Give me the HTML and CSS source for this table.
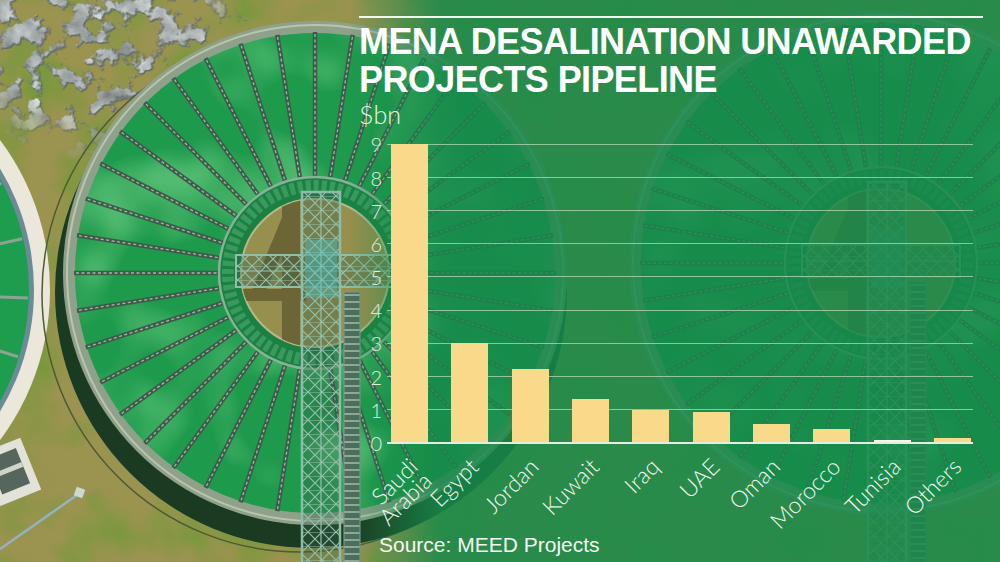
FILE: index.html
```html
<!DOCTYPE html>
<html lang="en">
<head>
<meta charset="utf-8">
<title>MENA desalination unawarded projects pipeline</title>
<link rel="stylesheet" href="styles.css">
</head>
<body>
<div class="canvas">
  <svg class="photo" width="1000" height="562" viewBox="0 0 1000 562" aria-hidden="true">
    <defs>
      <filter id="patchf" x="0" y="0" width="1" height="1" color-interpolation-filters="sRGB">
        <feTurbulence type="fractalNoise" baseFrequency="0.018" numOctaves="3" seed="3"/>
        <feColorMatrix type="matrix" values="0 0 0 0 0.45  0 0 0 0 0.6  0 0 0 0 0.22  2.2 0 0 0 -0.95"/>
      </filter>
      <filter id="rockf" x="0" y="0" width="1" height="1" color-interpolation-filters="sRGB">
        <feTurbulence type="fractalNoise" baseFrequency="0.045" numOctaves="4" seed="11" result="n"/>
        <feColorMatrix in="n" type="matrix" values="0 0 0 0 0.40  0 0 0 0 0.43  0 0 0 0 0.42  13 0 0 0 -6.5" result="dark"/>
        <feColorMatrix in="n" type="matrix" values="0 0.55 0 0 0.4  0 0.55 0 0 0.42  0 0.55 0 0 0.42  13 0 0 0 -7.0" result="light"/>
        <feOffset in="light" dx="-1" dy="-1" result="lo"/>
        <feMerge><feMergeNode in="dark"/><feMergeNode in="lo"/></feMerge>
      </filter>
      <filter id="cloudf" x="0" y="0" width="1" height="1" color-interpolation-filters="sRGB">
        <feTurbulence type="fractalNoise" baseFrequency="0.013" numOctaves="2" seed="5"/>
        <feColorMatrix type="matrix" values="0 0 0 0 0.33  0 0 0 0 0.74  0 0 0 0 0.45  2.8 0 0 0 -1.25"/>
      </filter>
      <radialGradient id="rockfade" cx="0.45" cy="0.4" r="0.6">
        <stop offset="0" stop-color="#fff"/>
        <stop offset="0.6" stop-color="#fff"/>
        <stop offset="1" stop-color="#000"/>
      </radialGradient>
      <mask id="rockmask">
        <ellipse cx="112" cy="62" rx="150" ry="100" fill="url(#rockfade)"/>
      </mask>
      <pattern id="xt" width="14" height="14" patternUnits="userSpaceOnUse">
        <rect width="14" height="14" fill="#35624d" fill-opacity="0.35"/>
        <path d="M0 0L14 14M14 0L0 14" stroke="#93bfa9" stroke-width="1.2"/>
        <path d="M0 0H14" stroke="#93bfa9" stroke-width="1"/>
      </pattern>
      <pattern id="lad" width="17" height="7" patternUnits="userSpaceOnUse">
        <rect width="17" height="7" fill="#4f6d5c"/>
        <rect width="17" height="2" fill="#93aa9b"/>
      </pattern>
      <clipPath id="waterclip"><circle cx="315" cy="273" r="240"/></clipPath>
      <clipPath id="tanclip"><circle cx="315" cy="273" r="74"/></clipPath>
      <g id="sp">
        <line x1="408" y1="273" x2="556" y2="273" stroke="#3e5b4a" stroke-width="4.5"/>
        <line x1="408" y1="273" x2="556" y2="273" stroke="#a2b7a5" stroke-width="1.3" stroke-dasharray="3 2.5"/>
      </g>
      <g id="spokes">
        <use href="#sp"/>
        <use href="#sp" transform="rotate(9 315 273)"/>
        <use href="#sp" transform="rotate(18 315 273)"/>
        <use href="#sp" transform="rotate(27 315 273)"/>
        <use href="#sp" transform="rotate(36 315 273)"/>
        <use href="#sp" transform="rotate(45 315 273)"/>
        <use href="#sp" transform="rotate(54 315 273)"/>
        <use href="#sp" transform="rotate(63 315 273)"/>
        <use href="#sp" transform="rotate(72 315 273)"/>
        <use href="#sp" transform="rotate(81 315 273)"/>
        <use href="#sp" transform="rotate(99 315 273)"/>
        <use href="#sp" transform="rotate(108 315 273)"/>
        <use href="#sp" transform="rotate(117 315 273)"/>
        <use href="#sp" transform="rotate(126 315 273)"/>
        <use href="#sp" transform="rotate(135 315 273)"/>
        <use href="#sp" transform="rotate(144 315 273)"/>
        <use href="#sp" transform="rotate(153 315 273)"/>
        <use href="#sp" transform="rotate(162 315 273)"/>
        <use href="#sp" transform="rotate(171 315 273)"/>
        <use href="#sp" transform="rotate(180 315 273)"/>
        <use href="#sp" transform="rotate(189 315 273)"/>
        <use href="#sp" transform="rotate(198 315 273)"/>
        <use href="#sp" transform="rotate(207 315 273)"/>
        <use href="#sp" transform="rotate(216 315 273)"/>
        <use href="#sp" transform="rotate(225 315 273)"/>
        <use href="#sp" transform="rotate(234 315 273)"/>
        <use href="#sp" transform="rotate(243 315 273)"/>
        <use href="#sp" transform="rotate(252 315 273)"/>
        <use href="#sp" transform="rotate(261 315 273)"/>
        <use href="#sp" transform="rotate(270 315 273)"/>
        <use href="#sp" transform="rotate(279 315 273)"/>
        <use href="#sp" transform="rotate(288 315 273)"/>
        <use href="#sp" transform="rotate(297 315 273)"/>
        <use href="#sp" transform="rotate(306 315 273)"/>
        <use href="#sp" transform="rotate(315 315 273)"/>
        <use href="#sp" transform="rotate(324 315 273)"/>
        <use href="#sp" transform="rotate(333 315 273)"/>
        <use href="#sp" transform="rotate(342 315 273)"/>
        <use href="#sp" transform="rotate(351 315 273)"/>
      </g>
      <g id="tank">
        <circle cx="315" cy="273" r="252" fill="#8fa18a"/>
        <circle cx="315" cy="273" r="248" fill="none" stroke="#bac5ae" stroke-width="2"/>
        <circle cx="315" cy="273" r="240" fill="#1e9a4c"/>
        <rect x="70" y="30" width="490" height="490" filter="url(#cloudf)" clip-path="url(#waterclip)"/>
        <use href="#spokes"/>
        <circle cx="315" cy="273" r="96" fill="#1b8142"/>
        <circle cx="315" cy="273" r="87" fill="none" stroke="#3a9a5e" stroke-width="12" stroke-dasharray="5 3"/>
        <circle cx="315" cy="273" r="96" fill="none" stroke="#86b296" stroke-width="2.5"/>
        <circle cx="315" cy="273" r="74" fill="#978f4e" stroke="#b5b98d" stroke-width="2"/>
        <g clip-path="url(#tanclip)" fill="#6c6636">
          <rect x="282" y="190" width="18" height="170"/>
          <rect x="236" y="289" width="70" height="12"/>
          <polygon points="283,215 298,215 262,300 248,300"/>
        </g>
        <rect x="236" y="255" width="158" height="32" fill="url(#xt)" stroke="#8fbfa9" stroke-width="2"/>
        <line x1="236" y1="271" x2="394" y2="271" stroke="#98c4af" stroke-width="1.2"/>
        <rect x="302" y="192" width="38" height="380" fill="url(#xt)" stroke="#8dbca7" stroke-width="2.5"/>
        <line x1="321" y1="192" x2="321" y2="572" stroke="#95c1ad" stroke-width="1.2"/>
        <rect x="344" y="292" width="16" height="280" fill="url(#lad)" stroke="#7a978a" stroke-width="1.2"/>
        <rect x="305" y="240" width="32" height="58" fill="#4fc2c6" fill-opacity="0.4"/>
      </g>
      <linearGradient id="ovg" gradientUnits="userSpaceOnUse" x1="348" y1="0" x2="440" y2="0">
        <stop offset="0" stop-color="#16894a" stop-opacity="0"/>
        <stop offset="1" stop-color="#16894a" stop-opacity="0.85"/>
      </linearGradient>
    </defs>

    <rect width="1000" height="562" fill="#9b9350"/>
    <rect width="1000" height="562" filter="url(#patchf)"/>
    <g mask="url(#rockmask)">
      <rect x="0" y="0" width="280" height="175" filter="url(#rockf)"/>
    </g>

    <circle cx="-200" cy="290" r="250" fill="#ebe7db"/>
    <circle cx="-200" cy="290" r="234" fill="#6b8c97"/>
    <circle cx="-200" cy="290" r="229" fill="#1f9d4f"/>
    <g stroke="#8ea296" stroke-width="3">
      <line x1="-200" y1="290" x2="1.3" y2="183"/>
      <line x1="-200" y1="290" x2="22.2" y2="238.7"/>
      <line x1="-200" y1="290" x2="27.9" y2="298"/>
      <line x1="-200" y1="290" x2="18" y2="356.7"/>
      <line x1="-200" y1="290" x2="-6.6" y2="410.8"/>
    </g>

    <g transform="rotate(-22 15 470)">
      <rect x="-12" y="442" width="44" height="56" fill="#e2e2d8"/>
      <rect x="-6" y="450" width="30" height="38" fill="#55675c"/>
      <rect x="-6" y="465" width="30" height="5" fill="#d0d3c8"/>
    </g>
    <line x1="0" y1="549" x2="80" y2="493" stroke="#93b3c2" stroke-width="2.5"/>
    <rect x="75" y="488" width="9" height="9" fill="#cfd7d3" transform="rotate(20 79.5 492.5)"/>

    <circle cx="300" cy="294" r="258" fill="none" stroke="#4e5a35" stroke-width="1.5"/>
    <circle cx="311" cy="292" r="256" fill="#1b3a22"/>
    <use href="#tank"/>
    <use href="#tank" transform="translate(566 -10)"/>

    <rect width="1000" height="562" fill="url(#ovg)"/>
  </svg>

  <main class="panel">
    <div class="rule"></div>
    <h1 class="title">MENA DESALINATION UNAWARDED<br>PROJECTS PIPELINE</h1>
    <div class="unit">$bn</div>
    <div class="chart">
      <div class="yaxis">
        <span class="tick">9</span>
        <span class="tick">8</span>
        <span class="tick">7</span>
        <span class="tick">6</span>
        <span class="tick">5</span>
        <span class="tick">4</span>
        <span class="tick">3</span>
        <span class="tick">2</span>
        <span class="tick">1</span>
        <span class="tick">0</span>
      </div>
      <div class="plot">
        <div class="grid">
          <div class="gl"></div><div class="gl"></div><div class="gl"></div>
          <div class="gl"></div><div class="gl"></div><div class="gl"></div>
          <div class="gl"></div><div class="gl"></div><div class="gl"></div>
        </div>
        <div class="bars">
          <div class="bar" style="height:298px"></div>
          <div class="bar" style="height:99.3px"></div>
          <div class="bar" style="height:72.8px"></div>
          <div class="bar" style="height:43.2px"></div>
          <div class="bar" style="height:32.4px"></div>
          <div class="bar" style="height:30.2px"></div>
          <div class="bar" style="height:17.5px"></div>
          <div class="bar" style="height:13.2px"></div>
          <div class="bar bar-light" style="height:2.4px"></div>
          <div class="bar" style="height:4.4px"></div>
        </div>
      </div>
      <div class="xaxis">
        <div class="cell"><span class="lbl">Saudi<br>Arabia</span></div>
        <div class="cell"><span class="lbl">Egypt</span></div>
        <div class="cell"><span class="lbl">Jordan</span></div>
        <div class="cell"><span class="lbl">Kuwait</span></div>
        <div class="cell"><span class="lbl">Iraq</span></div>
        <div class="cell"><span class="lbl">UAE</span></div>
        <div class="cell"><span class="lbl">Oman</span></div>
        <div class="cell"><span class="lbl">Morocco</span></div>
        <div class="cell"><span class="lbl">Tunisia</span></div>
        <div class="cell"><span class="lbl">Others</span></div>
      </div>
    </div>
    <div class="source">Source: MEED Projects</div>
  </main>
</div>
</body>
</html>
```

FILE: styles.css
```css
html, body {
  margin: 0;
  padding: 0;
  background: #16894a;
}

.canvas {
  display: grid;
  width: 1000px;
  height: 562px;
  overflow: hidden;
}

.photo,
.panel {
  grid-area: 1 / 1;
}

.photo {
  display: block;
}

.panel {
  margin-left: 359px;
  width: 624px;
  padding-top: 16px;
  display: flex;
  flex-direction: column;
  color: #ffffff;
}

.rule {
  height: 2px;
  background: #f1f6ef;
}

.title {
  margin: 4.7px 0 0 0;
  font-family: "Liberation Sans", Arial, sans-serif;
  font-weight: 700;
  font-size: 36px;
  line-height: 38.5px;
  letter-spacing: -0.6px;
  white-space: nowrap;
}

.unit {
  margin-top: 2px;
  font-family: Lato, "Open Sans", sans-serif;
  font-weight: 300;
  font-size: 25px;
  line-height: 24px;
  color: #eef6ec;
}

.chart {
  margin-top: 18.3px;
  display: grid;
  grid-template-columns: 28px 586px;
  grid-template-rows: 300px 89px;
}

.yaxis {
  box-sizing: border-box;
  height: 300px;
  padding: 0.5px 5px 1px 0;
  display: flex;
  flex-direction: column;
  justify-content: space-between;
  align-items: flex-end;
}

.tick {
  height: 0;
  display: flex;
  align-items: center;
  font-family: Lato, "Open Sans", sans-serif;
  font-weight: 300;
  font-size: 20px;
  color: #e3efe2;
}

.plot {
  display: grid;
  height: 298px;
  border-bottom: 2px solid #e4eee0;
}

.grid,
.bars {
  grid-area: 1 / 1;
}

.grid {
  display: flex;
  flex-direction: column;
}

.gl {
  box-sizing: border-box;
  height: 33.111px;
  border-top: 1px solid rgba(214, 232, 208, 0.62);
}

.bars {
  display: flex;
  align-items: flex-end;
  gap: 23.33px;
  padding-left: 4px;
}

.bar {
  flex: none;
  width: 37px;
  background: #f9da8b;
}

.bar-light {
  background: #fbf3e4;
}

.xaxis {
  grid-column: 2;
  display: flex;
  gap: 23.33px;
  padding-left: 4px;
  padding-top: 8px;
}

.cell {
  flex: none;
  width: 37px;
  box-sizing: border-box;
  padding-right: 15px;
  display: flex;
  justify-content: flex-end;
  align-items: flex-start;
}

.lbl {
  flex: none;
  display: block;
  white-space: nowrap;
  text-align: right;
  font-family: Lato, "Open Sans", sans-serif;
  font-weight: 300;
  font-size: 23px;
  line-height: 20px;
  color: #f2f8f0;
  transform: rotate(-45deg);
  transform-origin: 100% 10px;
}

.source {
  padding-left: 20px;
  font-family: "Liberation Sans", Arial, sans-serif;
  font-size: 21px;
  line-height: 24px;
  color: #f4f8f2;
}
```
